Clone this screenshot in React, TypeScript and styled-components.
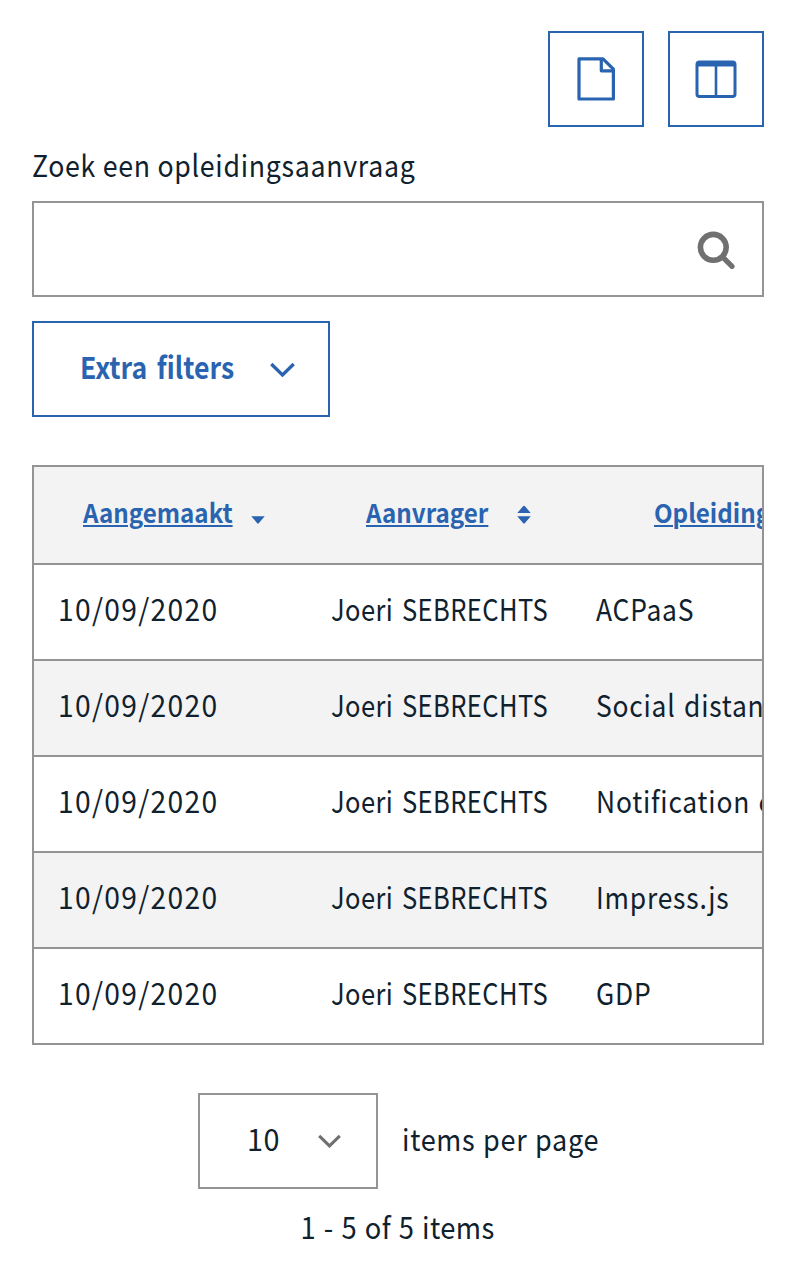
import React from "react";
import styled, { createGlobalStyle } from "styled-components";

const blue = "#2a64b0";
const line = "#949494";
const shade = "#f3f3f3";
const ink = "#10212e";
const grey = "#707070";

const GlobalStyle = createGlobalStyle`
  *, *::before, *::after { box-sizing: border-box; }
  body {
    margin: 0;
    background: #fff;
    color: ${ink};
    font-family: "Noto Sans CJK SC", "Noto Sans", sans-serif;
    font-size: 30px;
    line-height: 40px;
  }
  button, input { font: inherit; color: inherit; border-radius: 0; }
`;

const Page = styled.main`
  width: 796px;
  height: 1272px;
  padding: 31px 32px 0;
  overflow: hidden;
`;

const Toolbar = styled.div`
  display: flex;
  justify-content: flex-end;
  gap: 24px;
`;

const IconButton = styled.button`
  display: flex;
  align-items: center;
  justify-content: center;
  width: 96px;
  height: 96px;
  padding: 0;
  background: #fff;
  border: 2px solid ${blue};
`;

const Narrow = styled.span<{ $x: number; $gap?: number; $word?: number; $origin?: string }>`
  display: inline-block;
  white-space: pre;
  letter-spacing: ${(p) => p.$gap ?? 0}px;
  word-spacing: ${(p) => p.$word ?? 0}px;
  transform: scaleX(${(p) => p.$x});
  transform-origin: ${(p) => p.$origin ?? "left"} center;
`;

const Label = styled.label`
  display: flex;
  align-items: center;
  height: 74px;
`;

const SearchBox = styled.div`
  display: flex;
  align-items: center;
  height: 96px;
  padding-right: 24px;
  border: 2px solid ${line};
`;

const SearchInput = styled.input`
  flex: 1;
  height: 100%;
  padding: 0 24px;
  border: 0;
  outline: 0;
  background: transparent;
`;

const FilterButton = styled.button`
  display: flex;
  align-items: center;
  justify-content: space-between;
  width: 298px;
  height: 96px;
  margin-top: 24px;
  padding: 0 33px 0 46px;
  background: #fff;
  border: 2px solid ${blue};
  color: ${blue};
  font-weight: 700;
  white-space: nowrap;
`;

const Raised = styled.span<{ $by: number; $width?: number }>`
  display: block;
  flex: none;
  width: ${(p) => (p.$width ? `${p.$width}px` : "auto")};
  padding-bottom: ${(p) => p.$by * 2}px;
`;

const Table = styled.div`
  margin-top: 48px;
  border: 2px solid ${line};
  overflow: hidden;
`;

const Row = styled.div<{ $shaded?: boolean }>`
  display: grid;
  grid-template-columns: 273px 265px 300px;
  align-items: center;
  height: 96px;
  padding-bottom: 8px;
  border-top: 2px solid ${line};
  background: ${(p) => (p.$shaded ? shade : "#fff")};
`;

const HeadRow = styled(Row)`
  height: 96px;
  border-top: 0;
  padding-bottom: 6px;
  font-size: 26px;
`;

const Cell = styled.div`
  padding-left: 24px;
  white-space: nowrap;
`;

const HeadCell = styled.div<{ $left: number; $textWidth: number }>`
  display: grid;
  grid-template-columns: ${(p) => p.$textWidth}px auto;
  justify-content: start;
  align-items: center;
  padding-left: ${(p) => p.$left}px;
  color: ${blue};
  font-weight: 700;
`;

const HeadText = styled(Narrow)`
  justify-self: start;
  text-decoration: underline;
  text-decoration-thickness: 2px;
  text-underline-offset: 2px;
`;

const SortIcon = styled.svg`
  display: block;
  margin-top: 5px;
`;

const Pager = styled.div`
  display: flex;
  align-items: center;
  margin: 48px 0 0 166px;
`;

const PageSize = styled.button`
  display: flex;
  align-items: center;
  justify-content: space-between;
  width: 180px;
  height: 96px;
  margin-right: 24px;
  padding: 0 35px 0 47px;
  background: #fff;
  border: 2px solid ${line};
`;

const Count = styled.div`
  margin-top: 17px;
  text-align: center;
`;

const Chevron = ({ color, width }: { color: string; width: number }) => (
  <svg width={width} height={width * 0.6} viewBox="0 0 25 15" fill="none">
    <path d="M1.3 2L12.5 13L23.7 2" stroke={color} strokeWidth="3.3" />
  </svg>
);

const titles = ["ACPaaS", "Social distancing", "Notification engine", "Impress.js", "GDP"];

export default function App() {
  return (
    <Page>
      <GlobalStyle />
      <Toolbar>
        <IconButton aria-label="Document">
          <svg width="40" height="46" viewBox="0 0 40 46" fill="none" stroke={blue} strokeWidth="3.2" strokeLinejoin="round">
            <path d="M3 2.9H27L37.4 13.2V43H3Z" />
            <path d="M25.3 3V14.8H37.6" />
          </svg>
        </IconButton>
        <IconButton aria-label="Kolommen">
          <svg width="42" height="38" viewBox="0 0 42 38" fill="none" stroke={blue}>
            <rect x="2" y="2" width="38" height="34.4" rx="2.5" strokeWidth="3" />
            <path d="M2 3.8H40" strokeWidth="5.4" />
            <path d="M21 4V36" strokeWidth="2.6" />
          </svg>
        </IconButton>
      </Toolbar>

      <Label htmlFor="search">
        <Narrow $x={0.89} $gap={0.8}>Zoek een opleidingsaanvraag</Narrow>
      </Label>
      <SearchBox>
        <SearchInput id="search" />
        <svg width="42" height="42" viewBox="0 0 42 42" fill="none" stroke={grey}>
          <circle cx="17.3" cy="19.3" r="12.9" strokeWidth="5.6" />
          <path d="M27 29.3L36 38.3" strokeWidth="5.2" strokeLinecap="round" />
        </svg>
      </SearchBox>

      <FilterButton>
        <Raised $by={3} $width={156}>
          <Narrow $x={0.89} $word={4}>Extra filters</Narrow>
        </Raised>
        <Chevron color={blue} width={25} />
      </FilterButton>

      <Table>
        <HeadRow $shaded>
          <HeadCell $left={49} $textWidth={168}>
            <HeadText $x={0.93}>Aangemaakt</HeadText>
            <SortIcon width="14" height="20" viewBox="0 0 14 20" fill={blue}>
              <path d="M0.3 11.3H13.7L8 18Q7 19.2 6 18Z" />
            </SortIcon>
          </HeadCell>
          <HeadCell $left={59} $textWidth={151}>
            <HeadText $x={0.93}>Aanvrager</HeadText>
            <SortIcon width="14" height="20" viewBox="0 0 14 20" fill={blue}>
              <path d="M0.3 8H13.7L8 1.3Q7 0.1 6 1.3Z" />
              <path d="M0.3 11.3H13.7L8 18Q7 19.2 6 18Z" />
            </SortIcon>
          </HeadCell>
          <HeadCell $left={82} $textWidth={150}>
            <HeadText $x={0.93}>Opleiding</HeadText>
          </HeadCell>
        </HeadRow>
        {titles.map((title, i) => (
          <Row key={title} $shaded={i % 2 === 1}>
            <Cell>
              <Narrow $x={0.94} $gap={1.4}>10/09/2020</Narrow>
            </Cell>
            <Cell>
              <Narrow $x={0.85} $gap={0.5} $word={3}>Joeri SEBRECHTS</Narrow>
            </Cell>
            <Cell>
              <Narrow $x={0.88} $gap={0.9} $word={2}>{title}</Narrow>
            </Cell>
          </Row>
        ))}
      </Table>

      <Pager>
        <PageSize>
          <Raised $by={3}>
            <Narrow $x={0.96} $gap={0.5}>10</Narrow>
          </Raised>
          <Chevron color={grey} width={23} />
        </PageSize>
        <Raised $by={3}>
          <Narrow $x={0.9} $gap={0.8} $word={1}>items per page</Narrow>
        </Raised>
      </Pager>
      <Count>
        <Narrow $x={0.91} $gap={0.5} $word={1.2} $origin="center">1 - 5 of 5 items</Narrow>
      </Count>
    </Page>
  );
}
